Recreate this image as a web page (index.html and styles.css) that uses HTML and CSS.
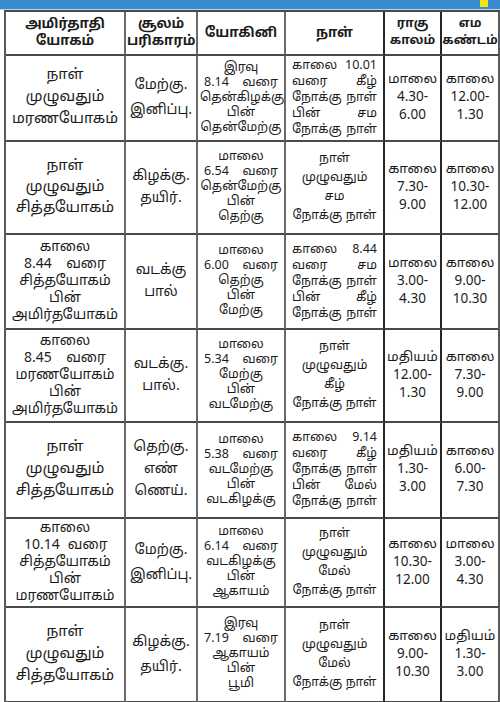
FILE: index.html
```html
<!DOCTYPE html>
<html lang="ta">
<head>
<meta charset="utf-8">
<title>அமிர்தாதி யோகம்</title>
<link rel="stylesheet" href="styles.css">
</head>
<body>
<div class="band"><span class="dot"></span></div>
<div class="grid">
  <div class="c h c1"><div>அமிர்தாதி</div><div>யோகம்</div></div>
  <div class="c h c2"><div>சூலம்</div><div>பரிகாரம்</div></div>
  <div class="c h c3"><div>யோகினி</div></div>
  <div class="c h c4 dk"><div>நாள்</div></div>
  <div class="c h c5"><div>ராகு</div><div>காலம்</div></div>
  <div class="c h c6"><div>எம</div><div>கண்டம்</div></div>

  <!-- row 1 -->
  <div class="c c1 l22"><div>நாள்</div><div>முழுவதும்</div><div>மரணயோகம்</div></div>
  <div class="c c2 l25"><div>மேற்கு.</div><div>இனிப்பு.</div></div>
  <div class="c c3"><div>இரவு</div><div class="j"><span>8.14</span><span>வரை</span></div><div>தென்கிழக்கு</div><div>பின்</div><div>தென்மேற்கு</div></div>
  <div class="c c4 dk"><div class="j"><span>காலை</span><span>10.01</span></div><div class="j"><span>வரை</span><span>கீழ்</span></div><div class="j"><span>நோக்கு</span><span>நாள்</span></div><div class="j"><span>பின்</span><span>சம</span></div><div class="j"><span>நோக்கு</span><span>நாள்</span></div></div>
  <div class="c c5 l18"><div>மாலை</div><div>4.30-</div><div>6.00</div></div>
  <div class="c c6 l18"><div>காலை</div><div>12.00-</div><div>1.30</div></div>

  <!-- row 2 -->
  <div class="c c1 l21"><div>நாள்</div><div>முழுவதும்</div><div>சித்தயோகம்</div></div>
  <div class="c c2 l22"><div>கிழக்கு.</div><div>தயிர்.</div></div>
  <div class="c c3"><div>மாலை</div><div class="j"><span>6.54</span><span>வரை</span></div><div>தென்மேற்கு</div><div>பின்</div><div>தெற்கு</div></div>
  <div class="c c4 dk l19"><div>நாள்</div><div>முழுவதும்</div><div>சம</div><div>நோக்கு நாள்</div></div>
  <div class="c c5 l18"><div>காலை</div><div>7.30-</div><div>9.00</div></div>
  <div class="c c6 l18"><div>காலை</div><div>10.30-</div><div>12.00</div></div>

  <!-- row 3 -->
  <div class="c c1 f5"><div>காலை</div><div class="j"><span>8.44</span><span>வரை</span></div><div>சித்தயோகம்</div><div>பின்</div><div>அமிர்தயோகம்</div></div>
  <div class="c c2 l22"><div>வடக்கு</div><div>பால்</div></div>
  <div class="c c3"><div>மாலை</div><div class="j"><span>6.00</span><span>வரை</span></div><div>தெற்கு</div><div>பின்</div><div>மேற்கு</div></div>
  <div class="c c4 dk"><div class="j"><span>காலை</span><span>8.44</span></div><div class="j"><span>வரை</span><span>சம</span></div><div class="j"><span>நோக்கு</span><span>நாள்</span></div><div class="j"><span>பின்</span><span>கீழ்</span></div><div class="j"><span>நோக்கு</span><span>நாள்</span></div></div>
  <div class="c c5 l18"><div>மாலை</div><div>3.00-</div><div>4.30</div></div>
  <div class="c c6 l18"><div>காலை</div><div>9.00-</div><div>10.30</div></div>

  <!-- row 4 -->
  <div class="c c1 f5"><div>காலை</div><div class="j"><span>8.45</span><span>வரை</span></div><div>மரணயோகம்</div><div>பின்</div><div>அமிர்தயோகம்</div></div>
  <div class="c c2 l22"><div>வடக்கு.</div><div>பால்.</div></div>
  <div class="c c3"><div>மாலை</div><div class="j"><span>5.34</span><span>வரை</span></div><div>மேற்கு</div><div>பின்</div><div>வடமேற்கு</div></div>
  <div class="c c4 dk l19"><div>நாள்</div><div>முழுவதும்</div><div>கீழ்</div><div>நோக்கு நாள்</div></div>
  <div class="c c5 l18"><div>மதியம்</div><div>12.00-</div><div>1.30</div></div>
  <div class="c c6 l18"><div>காலை</div><div>7.30-</div><div>9.00</div></div>

  <!-- row 5 -->
  <div class="c c1 l22"><div>நாள்</div><div>முழுவதும்</div><div>சித்தயோகம்</div></div>
  <div class="c c2 l22"><div>தெற்கு.</div><div>எண்</div><div>ணெய்.</div></div>
  <div class="c c3"><div>மாலை</div><div class="j"><span>5.38</span><span>வரை</span></div><div>வடமேற்கு</div><div>பின்</div><div>வடகிழக்கு</div></div>
  <div class="c c4 dk"><div class="j"><span>காலை</span><span>9.14</span></div><div class="j"><span>வரை</span><span>கீழ்</span></div><div class="j"><span>நோக்கு</span><span>நாள்</span></div><div class="j"><span>பின்</span><span>மேல்</span></div><div class="j"><span>நோக்கு</span><span>நாள்</span></div></div>
  <div class="c c5 l18"><div>மதியம்</div><div>1.30-</div><div>3.00</div></div>
  <div class="c c6 l18"><div>காலை</div><div>6.00-</div><div>7.30</div></div>

  <!-- row 6 -->
  <div class="c c1 f5"><div>காலை</div><div class="j"><span>10.14</span><span>வரை</span></div><div>சித்தயோகம்</div><div>பின்</div><div>மரணயோகம்</div></div>
  <div class="c c2 l25"><div>மேற்கு.</div><div>இனிப்பு.</div></div>
  <div class="c c3"><div>மாலை</div><div class="j"><span>6.14</span><span>வரை</span></div><div>வடகிழக்கு</div><div>பின்</div><div>ஆகாயம்</div></div>
  <div class="c c4 dk l19"><div>நாள்</div><div>முழுவதும்</div><div>மேல்</div><div>நோக்கு நாள்</div></div>
  <div class="c c5 l18"><div>காலை</div><div>10.30-</div><div>12.00</div></div>
  <div class="c c6 l18"><div>மாலை</div><div>3.00-</div><div>4.30</div></div>

  <!-- row 7 -->
  <div class="c c1 l22"><div>நாள்</div><div>முழுவதும்</div><div>சித்தயோகம்</div></div>
  <div class="c c2 l25"><div>கிழக்கு.</div><div>தயிர்.</div></div>
  <div class="c c3"><div>இரவு</div><div class="j"><span>7.19</span><span>வரை</span></div><div>ஆகாயம்</div><div>பின்</div><div>பூமி</div></div>
  <div class="c c4 dk l19"><div>நாள்</div><div>முழுவதும்</div><div>மேல்</div><div>நோக்கு நாள்</div></div>
  <div class="c c5 l18"><div>காலை</div><div>9.00-</div><div>10.30</div></div>
  <div class="c c6 l18"><div>மதியம்</div><div>1.30-</div><div>3.00</div></div>
</div>
</body>
</html>
```

FILE: styles.css
```css
html, body {
  margin: 0;
  padding: 0;
  background: #ffffff;
  overflow: hidden;
}
body {
  width: 500px;
  height: 702px;
  font-family: "Noto Sans Tamil", "Lohit Tamil", "Noto Sans", "DejaVu Sans", sans-serif;
  color: #1c1c1c;
}
.band {
  height: 9px;
  background: #3a8ccf;
  border-bottom: 1px solid #b7d3ea;
  position: relative;
}
.dot {
  position: absolute;
  left: 480px;
  top: 0;
  width: 8px;
  height: 7px;
  background: #f4e411;
}
.grid {
  margin-left: 4px;
  width: 496px;
  display: grid;
  grid-template-columns: 120px 72px 88px 99px 57px 58px;
  grid-template-rows: 44px 86px 93px 95px 93px 96px 89px 95px;
  border-left: 2px solid #5a5a5a;
  border-top: 2px solid #4a4a4a;
}
.c {
  box-sizing: border-box;
  border-right: 2px solid #6a6a6a;
  border-bottom: 2px solid #4a4a4a;
  display: flex;
  flex-direction: column;
  justify-content: center;
  text-align: center;
  font-size: 12.5px;
  line-height: 15px;
  white-space: nowrap;
  overflow: hidden;
}
.c.dk, .c.c5 {
  border-right-color: #262626;
}
.c.c6 {
  border-right-color: #5a5a5a;
}
.c1 { padding: 0 2px; font-size: 15px; line-height: 16px; }
.c1.f5 { font-size: 14px; line-height: 17px; }
.c2 { padding: 0 1px; font-size: 14px; }
.c3 { padding: 0 2px; }
.c4 { padding: 0 4px; line-height: 16px; }
.c5, .c6 { padding: 0; font-size: 13.5px; }

.h {
  font-weight: bold;
  font-size: 13.5px;
  line-height: 17px;
}
.h.c5, .h.c6 { font-size: 12.5px; }

.j {
  display: flex;
  justify-content: space-between;
}
.c1 .j { margin: 0 16px; gap: 8px; }
.c3 .j { margin: 0 4px; }
.c4 .j { margin: 0 2px; }

.l18 { line-height: 18px; }
.l19 { line-height: 19px; }
.l21 { line-height: 21px; }
.l22 { line-height: 22px; }
.l25 { line-height: 25px; }
```
